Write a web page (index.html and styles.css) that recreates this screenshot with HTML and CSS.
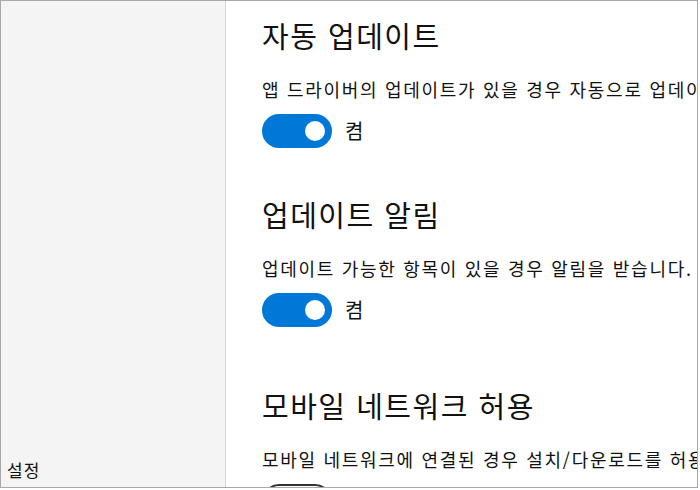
FILE: index.html
```html
<!DOCTYPE html>
<html lang="ko">
<head>
  <meta charset="UTF-8">
  <title>설정</title>
  <link rel="stylesheet" href="styles.css">
</head>
<body>
  <div class="window">
    <aside class="sidebar">
      <span class="sidebar-title">설정</span>
    </aside>

    <main class="content">
      <section class="setting first">
        <h2>자동 업데이트</h2>
        <p class="desc">앱 드라이버의 업데이트가 있을 경우 자동으로 업데이트합니다.</p>
        <div class="toggle-row">
          <span class="toggle on"><span class="knob"></span></span>
          <span class="state">켬</span>
        </div>
      </section>

      <section class="setting second">
        <h2>업데이트 알림</h2>
        <p class="desc">업데이트 가능한 항목이 있을 경우 알림을 받습니다.</p>
        <div class="toggle-row">
          <span class="toggle on"><span class="knob"></span></span>
          <span class="state">켬</span>
        </div>
      </section>

      <section class="setting third">
        <h2>모바일 네트워크 허용</h2>
        <p class="desc">모바일 네트워크에 연결된 경우 설치/다운로드를 허용합니다.</p>
        <div class="toggle-row">
          <span class="toggle"><span class="knob"></span></span>
          <span class="state">끔</span>
        </div>
      </section>
    </main>
  </div>
</body>
</html>
```

FILE: styles.css
```css
body {
  margin: 0;
  background: #fff;
  font-family: "Noto Sans CJK KR", "Noto Sans", sans-serif;
  color: #111;
}

.window {
  display: flex;
  width: 696px;
  height: 486px;
  border: 1px solid #a8a8a8;
  overflow: hidden;
  background: #fff;
}

.sidebar {
  flex: 0 0 225px;
  background: #f4f4f4;
  border-right: 1px solid #d6d6d6;
  display: flex;
  flex-direction: column;
  justify-content: flex-end;
  padding: 0 0 6px 6px;
  box-sizing: border-box;
}

.sidebar-title {
  font-size: 17px;
  line-height: 22px;
  letter-spacing: 1px;
}

.content {
  flex: 1;
  padding: 14px 0 0 36px;
  white-space: nowrap;
  overflow: hidden;
}

.setting h2 {
  margin: 0;
  font-size: 29px;
  font-weight: 400;
  line-height: 40px;
  letter-spacing: 1.5px;
}

.desc {
  margin: 21px 0 0;
  font-size: 18px;
  line-height: 26px;
  letter-spacing: 1.7px;
}

.toggle-row {
  display: flex;
  align-items: center;
  gap: 13px;
  margin-top: 12px;
}

.toggle {
  box-sizing: border-box;
  width: 70px;
  height: 34px;
  border-radius: 17px;
  border: 2px solid #333;
  background: #fff;
  display: flex;
  align-items: center;
  padding: 0 5px;
}

.toggle .knob {
  width: 20px;
  height: 20px;
  border-radius: 50%;
  background: #333;
}

.toggle.on {
  background: #0078d7;
  border-color: #0078d7;
  justify-content: flex-end;
}

.toggle.on .knob {
  background: #fff;
}

.state {
  font-size: 20px;
  line-height: 26px;
}

.second {
  margin-top: 46px;
}

.third {
  margin-top: 58px;
}
```
